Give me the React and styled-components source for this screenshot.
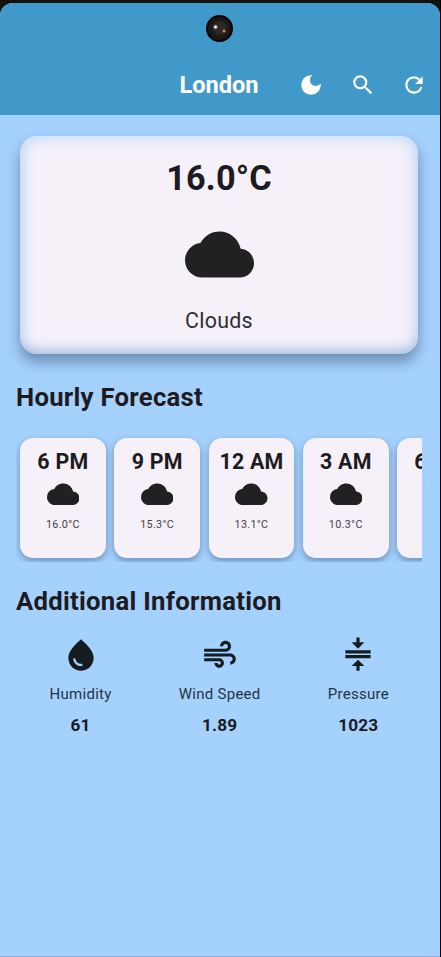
import React from "react";
import styled, { createGlobalStyle } from "styled-components";
import {
  MdDarkMode,
  MdSearch,
  MdRefresh,
  MdCloud,
  MdWaterDrop,
  MdAir,
  MdCompress,
} from "react-icons/md";

const GlobalStyle = createGlobalStyle`
  * { box-sizing: border-box; }
  body { margin: 0; background: #111; font-family: Roboto, "Noto Sans", sans-serif; color: #1d1b20; }
  svg { display: block; flex: none; }
`;

const Phone = styled.main`
  height: 957px;
  padding: 3px 1px 0 0;
  background: linear-gradient(90deg, #121212 0 440px, #000 440px);
  overflow: hidden;
`;

const Screen = styled.div`
  height: 954px;
  display: flex;
  flex-direction: column;
  background: #a5d1ff;
  border-radius: 13px 13px 0 0;
  border-bottom: 1px solid #8fb2dc;
  overflow: hidden;
`;

const Header = styled.header`
  height: 112px;
  flex: none;
  background: #4099c8;
  color: #fff;
`;

const StatusArea = styled.div`
  height: 55px;
  display: flex;
  justify-content: center;
  padding: 12px 2px 0 0;
`;

const Camera = styled.div`
  width: 27px;
  height: 27px;
  border-radius: 50%;
  border: 2px solid #000;
  background:
    radial-gradient(circle at 7.5px 10px, #fff 0 0.8px, #a79f9a80 1.8px, transparent 3px),
    radial-gradient(circle at 16px 14px, #c98a4c 0 0.8px, transparent 2px),
    radial-gradient(circle at 12px 11px, #2f2828 0 5px, #1c1a1a 8px, #171717 12px);
`;

const Toolbar = styled.div`
  height: 54px;
  display: grid;
  grid-template-columns: 1fr auto 1fr;
  align-items: center;
`;

const City = styled.h1`
  grid-column: 2;
  margin: 0;
  padding: 0 2px 1px 0;
  font-size: 23.6px;
  line-height: 28px;
  font-weight: 700;
`;

const Actions = styled.div`
  display: flex;
  justify-content: flex-end;
  gap: 25.5px;
  padding-right: 13px;
`;

const IconButton = styled.button`
  display: block;
  border: 0;
  padding: 0;
  background: none;
  color: #fff;
  font-size: 26px;
`;

const Content = styled.div`
  padding: 21px 17px 0 16px;
`;

const CurrentCard = styled.section`
  height: 218px;
  margin: 0 5px 0 4px;
  padding-top: 22px;
  display: flex;
  flex-direction: column;
  align-items: center;
  border-radius: 17px;
  background: #f6f1f9;
  color: #212121;
  box-shadow:
    inset 0 0 16px 2px rgba(165, 209, 255, 0.7),
    inset 0 -6px 12px -5px rgba(70, 85, 110, 0.5),
    0 8px 14px 0 rgba(25, 45, 70, 0.42);
`;

const Temperature = styled.div`
  color: #1d1b20;
  font-size: 34.3px;
  line-height: 40px;
  font-weight: 700;
  letter-spacing: 0.1px;
`;

const CloudSlot = styled.div`
  margin: 22px 0 19px;
`;

const Condition = styled.div`
  font-size: 21.4px;
  line-height: 26px;
  letter-spacing: 0.27px;
  color: #302e33;
`;

const SectionTitle = styled.h2`
  margin: ${(p) => p.$top}px 0 0;
  font-size: 25.7px;
  line-height: 32px;
  font-weight: 700;
  letter-spacing: 0.27px;
`;

const Hours = styled.div`
  height: 130px;
  margin: 19px 1px 0 0;
  padding: 5.4px 4px 0;
  display: flex;
  gap: 8.5px;
  overflow: hidden;
`;

const HourCard = styled.article`
  width: 85.8px;
  height: 120px;
  flex: none;
  padding-top: 11.3px;
  display: flex;
  flex-direction: column;
  align-items: center;
  border-radius: 13px;
  background: #f6f1f9;
  color: #212121;
  box-shadow: 0 3px 7px rgba(25, 45, 70, 0.4);
`;

const HourLabel = styled.div`
  color: #1d1b20;
  font-size: 21.4px;
  line-height: 26px;
  font-weight: 700;
  letter-spacing: 0.25px;
  margin-bottom: 2.5px;
  white-space: nowrap;
`;

const HourTemp = styled.div`
  margin-top: 8px;
  font-size: 10.8px;
  line-height: 14px;
  letter-spacing: 0.3px;
  color: #444247;
`;

const Metrics = styled.div`
  display: flex;
  justify-content: space-around;
  margin: 19px 0.5px 0 0;
`;

const Metric = styled.div`
  display: flex;
  flex-direction: column;
  align-items: center;
  color: #141c20;
`;

const MetricLabel = styled.div`
  margin-top: 11px;
  font-size: 15px;
  line-height: 18px;
  letter-spacing: 0.27px;
  color: #273442;
`;

const MetricValue = styled.div`
  margin-top: 12px;
  font-size: 17.2px;
  line-height: 20px;
  font-weight: 700;
  letter-spacing: 0.2px;
  color: #1d1b20;
`;

const hours = [
  ["6 PM", "16.0°C"],
  ["9 PM", "15.3°C"],
  ["12 AM", "13.1°C"],
  ["3 AM", "10.3°C"],
  ["6 AM", "9.8°C"],
];

const metrics = [
  [MdWaterDrop, "Humidity", "61"],
  [MdAir, "Wind Speed", "1.89"],
  [MdCompress, "Pressure", "1023"],
];

export default function App() {
  return (
    <Phone>
      <GlobalStyle />
      <Screen>
        <Header>
          <StatusArea>
            <Camera />
          </StatusArea>
          <Toolbar>
            <City>London</City>
            <Actions>
              <IconButton aria-label="Dark mode"><MdDarkMode /></IconButton>
              <IconButton aria-label="Search"><MdSearch /></IconButton>
              <IconButton aria-label="Refresh"><MdRefresh /></IconButton>
            </Actions>
          </Toolbar>
        </Header>
        <Content>
          <CurrentCard>
            <Temperature>16.0°C</Temperature>
            <CloudSlot><MdCloud size={69} /></CloudSlot>
            <Condition>Clouds</Condition>
          </CurrentCard>
          <SectionTitle $top={27.4}>Hourly Forecast</SectionTitle>
          <Hours>
            {hours.map(([time, temp]) => (
              <HourCard key={time}>
                <HourLabel>{time}</HourLabel>
                <MdCloud size={32.5} />
                <HourTemp>{temp}</HourTemp>
              </HourCard>
            ))}
          </Hours>
          <SectionTitle $top={22.6}>Additional Information</SectionTitle>
          <Metrics>
            {metrics.map(([Icon, label, value]) => (
              <Metric key={label}>
                <Icon size={38} />
                <MetricLabel>{label}</MetricLabel>
                <MetricValue>{value}</MetricValue>
              </Metric>
            ))}
          </Metrics>
        </Content>
      </Screen>
    </Phone>
  );
}
